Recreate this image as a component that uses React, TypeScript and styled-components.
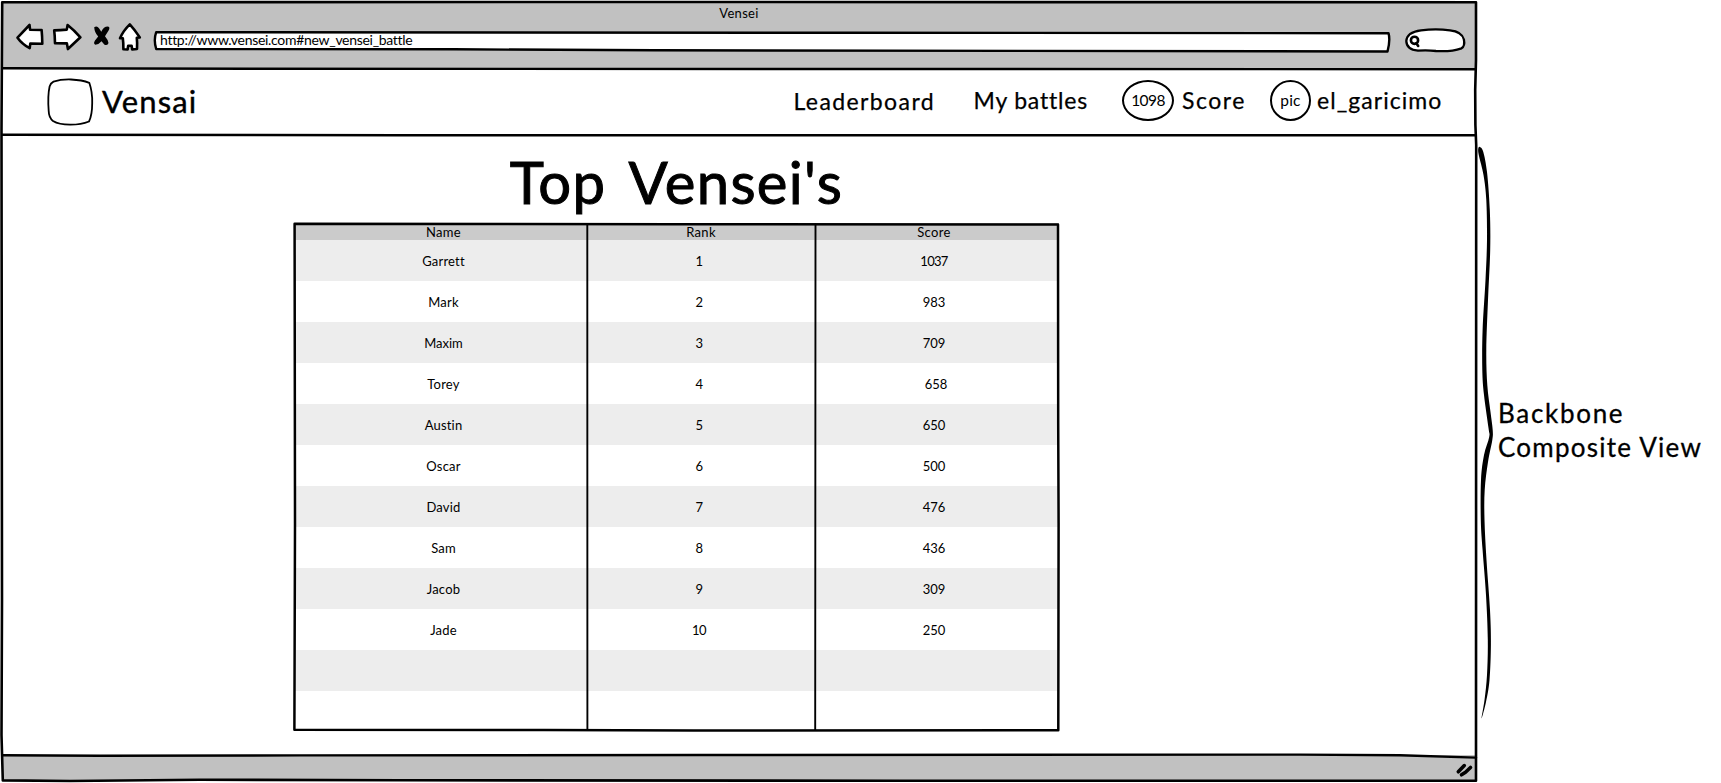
import React from 'react';
import styled, { createGlobalStyle } from 'styled-components';

const INK = '#000';
const CHROME = '#c1c1c1';

const GlobalStyle = createGlobalStyle`
  * { box-sizing: border-box; }
  body {
    margin: 0;
    background: #fff;
    color: ${INK};
    font-family: Lato, "Liberation Sans", sans-serif;
    font-variant-ligatures: none;
    overflow: hidden;
  }
`;

type Point = [number, number];

/* Smooth closed outline through a list of points. */
function smoothLoop(points: Point[]): string {
  const n = points.length;
  const at = (i: number) => points[(i + n) % n];
  let d = `M${points[0][0]} ${points[0][1]}`;
  for (let i = 0; i < n; i++) {
    const [p0, p1, p2, p3] = [at(i - 1), at(i), at(i + 1), at(i + 2)];
    const c1 = [p1[0] + (p2[0] - p0[0]) / 6, p1[1] + (p2[1] - p0[1]) / 6];
    const c2 = [p2[0] - (p3[0] - p1[0]) / 6, p2[1] - (p3[1] - p1[1]) / 6];
    d += ` C${c1[0]} ${c1[1]} ${c2[0]} ${c2[1]} ${p2[0]} ${p2[1]}`;
  }
  return d + 'Z';
}

const Page = styled.div`
  display: flex;
  width: 1721px;
  height: 783px;
`;

const BrowserFrame = styled.div`
  position: relative;
  display: flex;
  flex-direction: column;
  width: 1477px;
  height: 783px;
  padding: 2px 1px 3px 2px;
  flex: none;
`;

const Outline = styled.svg`
  position: absolute;
  inset: 0;
  width: 100%;
  height: 100%;
  overflow: visible;
  pointer-events: none;
  fill: none;
  stroke: ${INK};
  stroke-linecap: round;
  stroke-linejoin: round;
`;

const Backdrop = styled(Outline)`
  fill: #fff;
  stroke-width: 2.4;
`;

const Sketch = styled.svg`
  display: block;
  flex: none;
  overflow: visible;
  fill: #fff;
  stroke: ${INK};
  stroke-width: 2.6;
  stroke-linecap: round;
  stroke-linejoin: round;
`;

const TitleBar = styled.header`
  height: 67px;
  flex: none;
  background: ${CHROME};
`;

const WindowTitle = styled.div`
  height: 20px;
  padding-top: 2px;
  text-align: center;
  font-size: 13px;
  line-height: 18px;
  letter-spacing: 0.31px;
`;

const Toolbar = styled.div`
  display: flex;
  align-items: flex-start;
  padding-left: 14px;
`;

const ToolButton = styled.span<{ $gap: number }>`
  margin-right: ${(p) => p.$gap}px;
`;

const AddressField = styled.div`
  position: relative;
  width: 1237px;
  height: 22px;
  margin: 9px 14px 0 0;
  padding-left: 6px;
  font-size: 14px;
  line-height: 18px;
  letter-spacing: -0.3px;
`;

const AddressText = styled.span`
  position: relative;
`;

const SearchField = styled.div`
  margin-top: 6px;
`;

const NavBar = styled.nav`
  display: flex;
  align-items: center;
  height: 66px;
  flex: none;
  padding-left: 45px;
`;

const Brand = styled.div`
  display: flex;
  align-items: center;
  gap: 8px;
  width: 746.5px;
`;

const BrandName = styled.span`
  margin-bottom: 3px;
  font-size: 31px;
  line-height: 40px;
  letter-spacing: 1.1px;
  -webkit-text-stroke: 0.4px ${INK};
`;

const NavLinks = styled.div`
  display: grid;
  grid-template-columns: 180px 148.5px 148px auto;
  align-items: center;
  height: 100%;
`;

const NavItem = styled.div`
  display: flex;
  align-items: center;
`;

const NavText = styled.span<{ $lift: number; $tracking: number }>`
  margin-bottom: ${(p) => p.$lift}px;
  font-size: 23px;
  line-height: 30px;
  letter-spacing: ${(p) => p.$tracking}px;
  white-space: nowrap;
  -webkit-text-stroke: 0.25px ${INK};
`;

const Badge = styled.span<{ $width: number; $gap: number; $tracking: number }>`
  display: flex;
  align-items: center;
  justify-content: center;
  width: ${(p) => p.$width}px;
  height: 41px;
  margin: 0 ${(p) => p.$gap}px 4px 0;
  border: 2px solid ${INK};
  border-radius: 50%;
  font-size: 15.5px;
  line-height: 20px;
  letter-spacing: ${(p) => p.$tracking}px;
`;

const Content = styled.main`
  flex: 1;
  width: 765px;
  margin-left: 292px;
  padding-top: 11px;
`;

const Heading = styled.h1`
  margin: 0 0 7px;
  height: 70px;
  text-align: center;
  font-size: 58px;
  font-weight: 400;
  line-height: 72px;
  letter-spacing: 1.35px;
  word-spacing: 8px;
  -webkit-text-stroke: 1px ${INK};
  stroke-linejoin: round;
`;

const Table = styled.div`
  position: relative;
  height: 508px;
`;

const Row = styled.div<{ $tone: string; $height: number }>`
  display: grid;
  grid-template-columns: 293px 228px 244px;
  align-items: center;
  height: ${(p) => p.$height}px;
  background: ${(p) => p.$tone};
`;

const Cell = styled.div<{ $shift?: number; $tracking?: number }>`
  padding: 1px 0 0;
  text-align: center;
  text-indent: ${(p) => (p.$shift ?? 0) * 2}px;
  font-size: 13px;
  line-height: 16px;
  letter-spacing: ${(p) => p.$tracking ?? 0.34}px;
`;

const StatusBar = styled.footer`
  height: 25px;
  flex: none;
  background: ${CHROME};
`;

const Annotation = styled.aside`
  display: flex;
`;

const Note = styled.p`
  margin: 396px 0 0 4px;
  font-size: 26px;
  line-height: 34px;
  -webkit-text-stroke: 0.3px ${INK};
`;

const NoteLine = styled.span<{ $tracking: number }>`
  display: block;
  letter-spacing: ${(p) => p.$tracking}px;
  white-space: nowrap;
`;

const BackIcon = () => (
  <Sketch width="28" height="30">
    <path d="M1.5 15.7 13.5 3 14.1 7.8 25.6 8 Q26.2 14 26.3 21.7L14.3 21.6 13.7 26.2 Q6 22 1.5 15.7Z" />
  </Sketch>
);

const ForwardIcon = () => (
  <Sketch width="29" height="30">
    <path d="M1.2 8.4 Q7 8.2 13.8 7.6L14.6 3 Q21 8 27.4 15.3L14.9 27 13.9 21.4 2 21.3Q1.9 14 1.2 8.4Z" />
  </Sketch>
);

const StopIcon = () => (
  <Sketch width="17" height="30">
    <path
      d="M1.2 5.2Q4 3.2 6 6.2L8.3 9.8Q10.5 4.5 15 4.6Q17.5 5.3 15.6 8.5L12 14.3Q14.8 17.5 15.5 21Q14.8 24 11.5 22.7L8.5 19.2Q5.5 22.8 2.3 22.8Q0 21.5 2 18.5L5.2 14.5Q1.5 10.5 1.2 5.2Z"
      fill={INK}
      stroke="none"
    />
  </Sketch>
);

const HomeIcon = () => (
  <Sketch width="22" height="30">
    <path d="M10.8 2.4Q15.5 7.5 20.8 15.4L17.8 15.8Q18.4 21 18 27L13.2 27.5 12.6 23.8 9.2 23.8 8.6 27.5 4.4 27.3Q4.5 21 3.8 16.3L1 16.3Q4 9 10.8 2.4Z" />
  </Sketch>
);

const SearchIcon = () => (
  <Sketch width="61" height="25">
    <path
      d="M13 22.7Q1.5 21.5 1.3 13Q2 4 16 2.3Q31 .6 45 2.3Q57 3.5 58.9 11.5Q60.2 18 56.5 20.3Q46 24 31 23Q22 22 13 22.7Z"
      strokeWidth="2.3"
    />
    <circle cx="9.5" cy="12.3" r="3.6" />
    <path d="M11.3 15.3 13.2 18" />
  </Sketch>
);

const LogoBox = () => (
  <Sketch width="47" height="48">
    <path
      style={{ strokeWidth: 1.8 }}
      d="M6.5 3.6Q14 1.2 24 1.5Q35 2 42.300 4.8Q45.5 14 45.200 25Q45.2 37 42 43.5Q34 46.8 23 46.700Q12 46.600 6 43Q1.8 39.5 1.7 33Q.5 18 2.6 8.5Q3.6 5 6.5 3.6Z"
    />
  </Sketch>
);

const BRACE: Point[] = [
  [3, 147], [6.3, 152], [10, 172], [12.8, 210], [13.2, 250], [11, 300], [9.3, 350], [10.3, 385],
  [13.5, 412], [15.7, 430], [15.3, 440], [11, 462], [7.7, 490], [7.5, 520], [9.5, 560], [13, 610],
  [13.9, 645], [12.5, 680], [9, 702], [4.5, 718.5], [7.5, 700], [10, 675], [10.8, 640], [9, 595],
  [5.6, 550], [3.8, 520], [4, 480], [7, 455], [12.2, 437], [11.5, 428], [7, 395], [5.3, 370], [5.6, 330],
  [8.5, 280], [10, 240], [9.3, 200], [6.5, 175], [2, 156], [1.2, 149],
];

const Brace = () => (
  <Sketch width="17" height="783">
    <path d={smoothLoop(BRACE)} fill={INK} stroke="none" />
  </Sketch>
);

const players: [string, string, string][] = [
  ['Garrett', '1', '1037'],
  ['Mark', '2', '983'],
  ['Maxim', '3', '709'],
  ['Torey', '4', '658'],
  ['Austin', '5', '650'],
  ['Oscar', '6', '500'],
  ['David', '7', '476'],
  ['Sam', '8', '436'],
  ['Jacob', '9', '309'],
  ['Jade', '10', '250'],
  ['', '', ''],
  ['', '', ''],
];

export default function App() {
  return (
    <Page>
      <GlobalStyle />
      <BrowserFrame>
        <TitleBar>
          <WindowTitle>Vensei</WindowTitle>
          <Toolbar>
            <ToolButton $gap={9}><BackIcon /></ToolButton>
            <ToolButton $gap={11}><ForwardIcon /></ToolButton>
            <ToolButton $gap={9}><StopIcon /></ToolButton>
            <ToolButton $gap={13}><HomeIcon /></ToolButton>
            <AddressField>
              <Backdrop>
                <path d="M2.2 1.2 700 1.8 1234.5 2.2Q1236.500 9 1233.500 20.5L500 19.3 300 18.3 2.2 18Q-.6 9 2.2 1.2Z" />
              </Backdrop>
              <AddressText>http://www.vensei.com#new_vensei_battle</AddressText>
            </AddressField>
            <SearchField><SearchIcon /></SearchField>
          </Toolbar>
        </TitleBar>
        <NavBar>
          <Brand>
            <LogoBox />
            <BrandName>Vensai</BrandName>
          </Brand>
          <NavLinks>
            <NavItem><NavText $lift={3} $tracking={1.4}>Leaderboard</NavText></NavItem>
            <NavItem><NavText $lift={4} $tracking={0.8}>My battles</NavText></NavItem>
            <NavItem>
              <Badge $width={52} $gap={8} $tracking={-0.6}>1098</Badge>
              <NavText $lift={5} $tracking={1.5}>Score</NavText>
            </NavItem>
            <NavItem>
              <Badge $width={41} $gap={6} $tracking={0.2}>pic</Badge>
              <NavText $lift={5} $tracking={1.05}>el_garicimo</NavText>
            </NavItem>
          </NavLinks>
        </NavBar>
        <Content>
          <Heading>Top Vensei's</Heading>
          <Table>
            <Row $tone="#cbcbcb" $height={17}>
              <Cell $shift={3}>Name</Cell>
              <Cell>Rank</Cell>
              <Cell $shift={-3}>Score</Cell>
            </Row>
            {players.map(([name, rank, score], i) => (
              <Row key={i} $tone={i % 2 ? '#fff' : '#ededed'} $height={i === players.length - 1 ? 39 : 41}>
                <Cell $shift={3} $tracking={name === 'Maxim' ? 0 : 0.2}>{name}</Cell>
                <Cell $shift={-2} $tracking={-0.5}>{rank}</Cell>
                <Cell $shift={score === '658' ? -1 : -3} $tracking={score.length > 3 ? -0.7 : -0.1}>{score}</Cell>
              </Row>
            ))}
            <Outline>
              <path strokeWidth="2.500" d="M.6 .7 380 1.2 764 1.5 764.2 200 764.6 300 764.3 507.2 400 507.6 250 507 .4 506.8 1 300Z" />
              <path strokeWidth="1.900" d="M293.3 1.5 293.4 507M521.5 1.5 521.2 507" />
            </Outline>
          </Table>
        </Content>
        <StatusBar />
        <Outline>
          <path strokeWidth="2.600" d="M2.2 2.2 700 2 1476 2.2 1476 60 1475.2 90 1475.4 125 1476.2 145 1476 780.7 900 780.8 400 780.2 200 779.8 70 781 2.8 780.4 1.5 735 2 600 1.5 130Z" />
          <path strokeWidth="2.400" d="M2.5 68.3 250 68.8 1475 69.2M2.5 134.8 400 135.2 1475 135.2M3 755.3 100 755.8 300 755.4 700 755 1300 754.6 1400 755.3 1476 757.6" />
          <path strokeWidth="3.600" d="M1458.3 771.8 1464.3 765.6M1461.500 774.8 1465.500 772.300 1470.500 767.500" />
        </Outline>
      </BrowserFrame>
      <Annotation>
        <Brace />
        <Note>
          <NoteLine $tracking={1.7}>Backbone</NoteLine>
          <NoteLine $tracking={1.25}>Composite View</NoteLine>
        </Note>
      </Annotation>
    </Page>
  );
}
